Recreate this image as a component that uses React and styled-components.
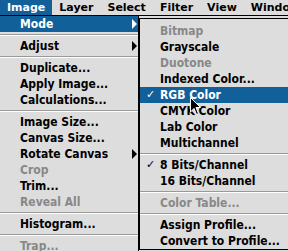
import React from "react";
import styled, { createGlobalStyle } from "styled-components";

const BLUE = "#11609a";

const Global = createGlobalStyle`
  html, body { margin: 0; padding: 0; background: #dddddd; }
`;

const Screen = styled.div`
  position: relative;
  width: 288px;
  height: 251px;
  overflow: hidden;
  background: #dddddd;
  font-family: "DejaVu Sans Condensed", "DejaVu Sans", sans-serif;
  font-weight: bold;
  font-size: 12px;
  color: #000;
`;

const MenuBar = styled.div`
  display: flex;
  height: 15px;
  border-bottom: 1px solid #000;
  background: #dddddd;
  white-space: nowrap;
  font-family: "DejaVu Sans", sans-serif;
  font-size: 11px;
`;

const BarItem = styled.div`
  padding: 0 7px;
  line-height: 15px;
  background: ${(p) => (p.$active ? BLUE : "transparent")};
  color: ${(p) => (p.$active ? "#fff" : "#000")};
`;

const Menus = styled.div`
  display: flex;
  align-items: flex-start;
`;

const Menu = styled.div`
  flex: none;
  width: 138px;
  background: #dddddd;
  border-right: 1px solid #000;
`;

const SubMenu = styled.div`
  flex: none;
  width: 170px;
  margin-top: 2px;
  padding-top: 4px;
  background: #dddddd;
  border: 1px solid #000;
`;

const Item = styled.div`
  position: relative;
  display: flex;
  align-items: center;
  height: 16px;
  padding-left: 20px;
  white-space: nowrap;
  background: ${(p) => (p.$active ? BLUE : "transparent")};
  color: ${(p) => (p.$active ? "#fff" : p.$disabled ? "#888888" : "#000")};
`;

const Check = styled.span`
  position: absolute;
  left: 6px;
  top: 0;
  line-height: 16px;
  font-family: "DejaVu Sans", sans-serif;
  font-weight: normal;
  font-size: 11px;
`;

const Arrow = styled.span`
  margin-left: auto;
  margin-right: 1px;
  width: 0;
  height: 0;
  border-top: 5px solid transparent;
  border-bottom: 5px solid transparent;
  border-left: 5px solid ${(p) => (p.$active ? "#fff" : "#000")};
`;

const Sep = styled.div`
  height: 6px;
  display: flex;
  flex-direction: column;
  justify-content: center;
  &::before {
    content: "";
    height: 1px;
    background: #999999;
  }
  &::after {
    content: "";
    height: 1px;
    background: #ffffff;
  }
`;

const Cursor = styled.svg`
  position: absolute;
  left: 190px;
  top: 97px;
`;

const leftItems = [
  { t: "Mode", arrow: true, active: true },
  "sep",
  { t: "Adjust", arrow: true },
  "sep",
  { t: "Duplicate..." },
  { t: "Apply Image..." },
  { t: "Calculations..." },
  "sep",
  { t: "Image Size..." },
  { t: "Canvas Size..." },
  { t: "Rotate Canvas", arrow: true },
  { t: "Crop", disabled: true },
  { t: "Trim..." },
  { t: "Reveal All", disabled: true },
  "sep",
  { t: "Histogram..." },
  "sep",
  { t: "Trap...", disabled: true },
];

const subItems = [
  { t: "Bitmap", disabled: true },
  { t: "Grayscale" },
  { t: "Duotone", disabled: true },
  { t: "Indexed Color..." },
  { t: "RGB Color", active: true, check: true },
  { t: "CMYK Color" },
  { t: "Lab Color" },
  { t: "Multichannel" },
  "sep",
  { t: "8 Bits/Channel", check: true },
  { t: "16 Bits/Channel" },
  "sep",
  { t: "Color Table...", disabled: true },
  "sep",
  { t: "Assign Profile..." },
  { t: "Convert to Profile..." },
];

function renderItems(list) {
  return list.map((it, i) =>
    it === "sep" ? (
      <Sep key={i} />
    ) : (
      <Item key={i} $active={it.active} $disabled={it.disabled}>
        {it.check && <Check>✓</Check>}
        {it.t}
        {it.arrow && <Arrow $active={it.active} />}
      </Item>
    )
  );
}

export default function App() {
  return (
    <>
      <Global />
      <Screen>
        <MenuBar>
          <BarItem $active>Image</BarItem>
          <BarItem>Layer</BarItem>
          <BarItem>Select</BarItem>
          <BarItem>Filter</BarItem>
          <BarItem>View</BarItem>
          <BarItem>Window</BarItem>
        </MenuBar>
        <Menus>
          <Menu>{renderItems(leftItems)}</Menu>
          <SubMenu>{renderItems(subItems)}</SubMenu>
        </Menus>
        <Cursor width="12" height="19" viewBox="0 0 12 19">
          <path
            d="M0.5 0.5 L0.5 15 L4 11.5 L6.5 17.5 L8.5 16.5 L6 10.5 L10.5 10.5 Z"
            fill="#000"
            stroke="#fff"
            strokeWidth="1"
          />
        </Cursor>
      </Screen>
    </>
  );
}
